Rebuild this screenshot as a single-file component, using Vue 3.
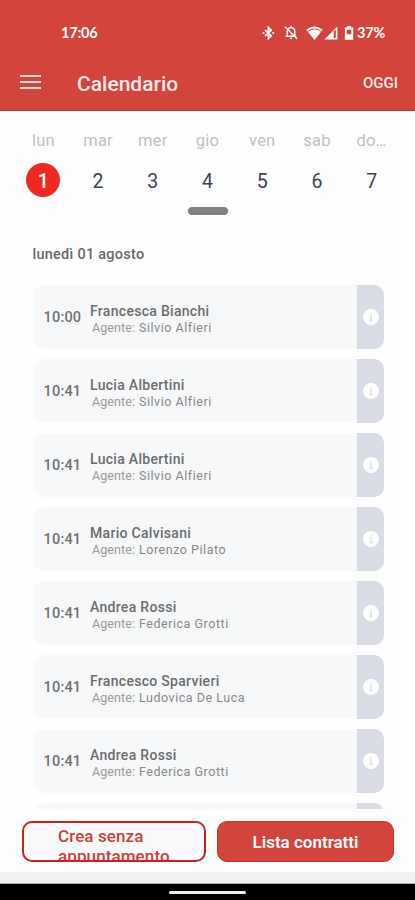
<script setup>
import { ref } from "vue";

const days = ["lun", "mar", "mer", "gio", "ven", "sab", "do…"];
const selectedDay = ref(1);

const appointments = ref([
  { time: "10:00", client: "Francesca Bianchi", agent: "Silvio Alfieri" },
  { time: "10:41", client: "Lucia Albertini", agent: "Silvio Alfieri" },
  { time: "10:41", client: "Lucia Albertini", agent: "Silvio Alfieri" },
  { time: "10:41", client: "Mario Calvisani", agent: "Lorenzo Pilato" },
  { time: "10:41", client: "Andrea Rossi", agent: "Federica Grotti" },
  { time: "10:41", client: "Francesco Sparvieri", agent: "Ludovica De Luca" },
  { time: "10:41", client: "Andrea Rossi", agent: "Federica Grotti" },
  { time: "", client: "", agent: "" },
]);
</script>

<template>
  <main class="app">
    <header class="header">
      <div class="status">
        <span class="clock">17:06</span>
        <div class="status-icons">
          <svg class="bluetooth" width="13" height="14" viewBox="0 0 13 14">
            <path
              d="M3 4l6.2 5.8L6.3 12.7V1.3l2.9 2.9L3 10"
              fill="none"
              stroke="#fff"
              stroke-width="1.6"
            />
            <circle cx="1.5" cy="7" r="1.1" fill="#fff" />
            <circle cx="11.2" cy="7" r="1.1" fill="#fff" />
          </svg>
          <svg class="bell" width="14" height="15" viewBox="0 0 14 15">
            <path
              d="M3.2 11V6.6c0-2.3 1.5-3.9 3.8-3.9s3.8 1.6 3.8 3.9V11M1.7 11.2h10.6M7 1v2M5.9 13.4h2.2M1 1.8l12 12"
              fill="none"
              stroke="#fff"
              stroke-width="1.4"
            />
          </svg>
          <svg class="wifi" width="17" height="14" viewBox="0 0 17 14">
            <path d="M.3 3.8Q8.5-2.6 16.7 3.8L8.5 14z" fill="#fff" />
            <path
              d="M2.1 5.2Q8.5.5 14.9 5.2"
              fill="none"
              stroke="#d2443c"
              stroke-width="1"
            />
          </svg>
          <svg class="signal" width="14" height="14" viewBox="0 0 14 14">
            <path d="M13.4.4v13H.4z" fill="#fff" />
            <path d="M9.8 5.3l2-2V12h-2z" fill="#d2443c" />
          </svg>
          <svg class="battery" width="10" height="14" viewBox="0 0 10 14">
            <path d="M3 0h4v1.5h2.2v12.3H.8V1.5H3z" fill="#fff" />
            <path d="M2.7 3.6h4.6v4.6H2.7z" fill="#d2443c" />
          </svg>
          <span class="percent">37%</span>
        </div>
      </div>
      <div class="toolbar">
        <button class="menu" aria-label="Menu">
          <i></i>
          <i></i>
          <i></i>
        </button>
        <h1>Calendario</h1>
        <button class="today">OGGI</button>
      </div>
    </header>

    <section class="week">
      <div
        v-for="(day, index) in days"
        :key="day"
        class="day"
        @click="selectedDay = index + 1"
      >
        <span class="day-name">{{ day }}</span>
        <span class="day-number" :class="{ selected: selectedDay == index + 1 }">
          {{ index + 1 }}
        </span>
      </div>
    </section>
    <div class="knob"></div>

    <h2>lunedì 01 agosto</h2>

    <section class="list">
      <article v-for="(item, index) in appointments" :key="index" class="card">
        <span class="time">{{ item.time }}</span>
        <div class="details">
          <p class="client">{{ item.client }}</p>
          <p v-if="item.agent" class="agent">
            <span class="label">Agente:</span>
            <span>{{ item.agent }}</span>
          </p>
        </div>
        <div class="info">
          <svg v-if="item.time" width="16" height="16" viewBox="0 0 16 16">
            <circle cx="8" cy="8" r="8" fill="#fff" />
            <path
              d="M8 3.9v1.6M6.7 7.1H8v4.3M6.5 11.5h3"
              fill="none"
              stroke="#d9dce4"
              stroke-width="1.3"
            />
          </svg>
        </div>
      </article>
    </section>

    <footer class="actions">
      <button class="outlined"><span>Crea senza appuntamento</span></button>
      <button class="filled">Lista contratti</button>
    </footer>
    <div class="strip"></div>
    <div class="nav-bar"><span></span></div>
  </main>
</template>

<style>
body {
  margin: 0;
  background-color: #fff;
}
</style>

<style scoped>
* {
  margin: 0;
  padding: 0;
  box-sizing: border-box;
}

.app {
  display: flex;
  flex-direction: column;
  width: 415px;
  height: 900px;
  overflow: hidden;
  background-color: #fefefe;
  font-family: Roboto, "Liberation Sans", sans-serif;
}

button {
  appearance: none;
  border: none;
  background: none;
  font-family: inherit;
  cursor: pointer;
}

.header {
  flex: none;
  height: 111px;
  padding-top: 22px;
  background-color: #d2443c;
  border-bottom: 1px solid #c9332a;
  color: #fff;
}

.status {
  display: flex;
  justify-content: space-between;
  align-items: center;
  height: 21px;
  padding: 0 29px 0 61px;
}

.clock {
  font-family: Lato, sans-serif;
  font-size: 14.5px;
  font-weight: 700;
  letter-spacing: -0.2px;
}

.status-icons {
  display: flex;
  align-items: center;
}

.bell {
  margin-left: 9px;
}

.wifi {
  margin-left: 8px;
}

.signal {
  margin-left: 1px;
}

.battery {
  margin-left: 6px;
}

.percent {
  width: 29px;
  margin-left: 3px;
  font-family: Lato, sans-serif;
  font-size: 14.5px;
  font-weight: 700;
  letter-spacing: -0.2px;
  white-space: nowrap;
}

.toolbar {
  display: flex;
  align-items: center;
  height: 40px;
  margin-top: 21px;
  padding: 0 17px 0 20px;
}

.menu {
  display: flex;
  flex-direction: column;
  gap: 4px;
  width: 21px;
  margin-top: -4px;
}

.menu i {
  height: 2px;
  background-color: #fbe0de;
}

h1 {
  flex: 1;
  margin-left: 36px;
  color: #fdeceb;
  font-size: 21px;
  font-weight: 500;
}

.today {
  margin-top: -2px;
  color: #fdeceb;
  font-size: 15px;
  font-weight: 500;
}

.week {
  display: flex;
  flex: none;
  height: 96px;
  padding: 18px 16px 0;
}

.day {
  display: flex;
  flex: 1;
  flex-direction: column;
  align-items: center;
}

.day-name {
  height: 34px;
  color: #bcc1c7;
  font-size: 16.5px;
  line-height: 23px;
  letter-spacing: 0.2px;
}

.day-number {
  width: 34px;
  height: 34px;
  border-radius: 50%;
  color: #39424f;
  font-size: 19.5px;
  line-height: 37px;
  text-align: center;
}

.day-number.selected {
  background-color: #ed2a1f;
  color: #fff;
  font-weight: 500;
}

.knob {
  flex: none;
  align-self: center;
  width: 40px;
  height: 8px;
  border-radius: 4px;
  background-color: #828282;
}

h2 {
  flex: none;
  height: 70px;
  padding: 31px 0 0 32.5px;
  color: #686868;
  font-size: 14.5px;
  font-weight: 500;
  line-height: 18px;
  letter-spacing: 0.25px;
}

.list {
  display: flex;
  flex: none;
  flex-direction: column;
  gap: 10.5px;
  height: 524px;
  padding: 0 31px 0 32.5px;
  overflow: hidden;
}

.card {
  display: flex;
  flex: none;
  height: 63.5px;
  border-radius: 10px;
  overflow: hidden;
  background-color: #f6f8fa;
}

.time {
  width: 57.5px;
  padding-left: 11px;
  color: #707070;
  font-size: 14.5px;
  font-weight: 500;
  line-height: 66px;
  letter-spacing: 0.2px;
}

.details {
  flex: 1;
  padding-top: 17px;
}

.client {
  color: #6c6c6c;
  font-size: 14px;
  font-weight: 500;
  line-height: 18px;
  letter-spacing: 0.3px;
}

.agent {
  display: flex;
  padding-left: 2px;
  color: #888;
  font-size: 12.5px;
  line-height: 16px;
  letter-spacing: 0.53px;
}

.label {
  width: 47px;
  color: #999;
  letter-spacing: 0.1px;
}

.info {
  display: flex;
  align-items: center;
  justify-content: center;
  width: 27px;
  background-color: #d9dce4;
}

.actions {
  display: flex;
  flex: none;
  gap: 11px;
  height: 63px;
  padding: 12px 21px 10px 22px;
}

.actions button {
  height: 41px;
  border-radius: 10px;
  font-size: 17px;
}

.outlined {
  width: 184px;
  padding: 3px 33px 0 34px;
  border: 2px solid #c9211e;
  overflow: hidden;
  background-color: #fafafa;
  color: #cf3d37;
  line-height: 20px;
  text-align: left;
  letter-spacing: 0.1px;
}

/* the second line runs past the button's bottom edge */
.outlined span {
  display: block;
  height: 34px;
  font-weight: 500;
}

.filled {
  flex: 1;
  border: 1px solid #c9332a;
  background-color: #d2443c;
  color: #fff;
  font-weight: 600;
}

.strip {
  flex: none;
  height: 12px;
  background-color: #f1f1f1;
  border-bottom: 1px solid #aaa;
}

.nav-bar {
  display: flex;
  flex: 1;
  justify-content: center;
  padding-top: 7px;
  background-color: #000;
}

.nav-bar span {
  width: 77px;
  height: 3px;
  border-radius: 2px;
  background-color: #f0f0f0;
}
</style>
